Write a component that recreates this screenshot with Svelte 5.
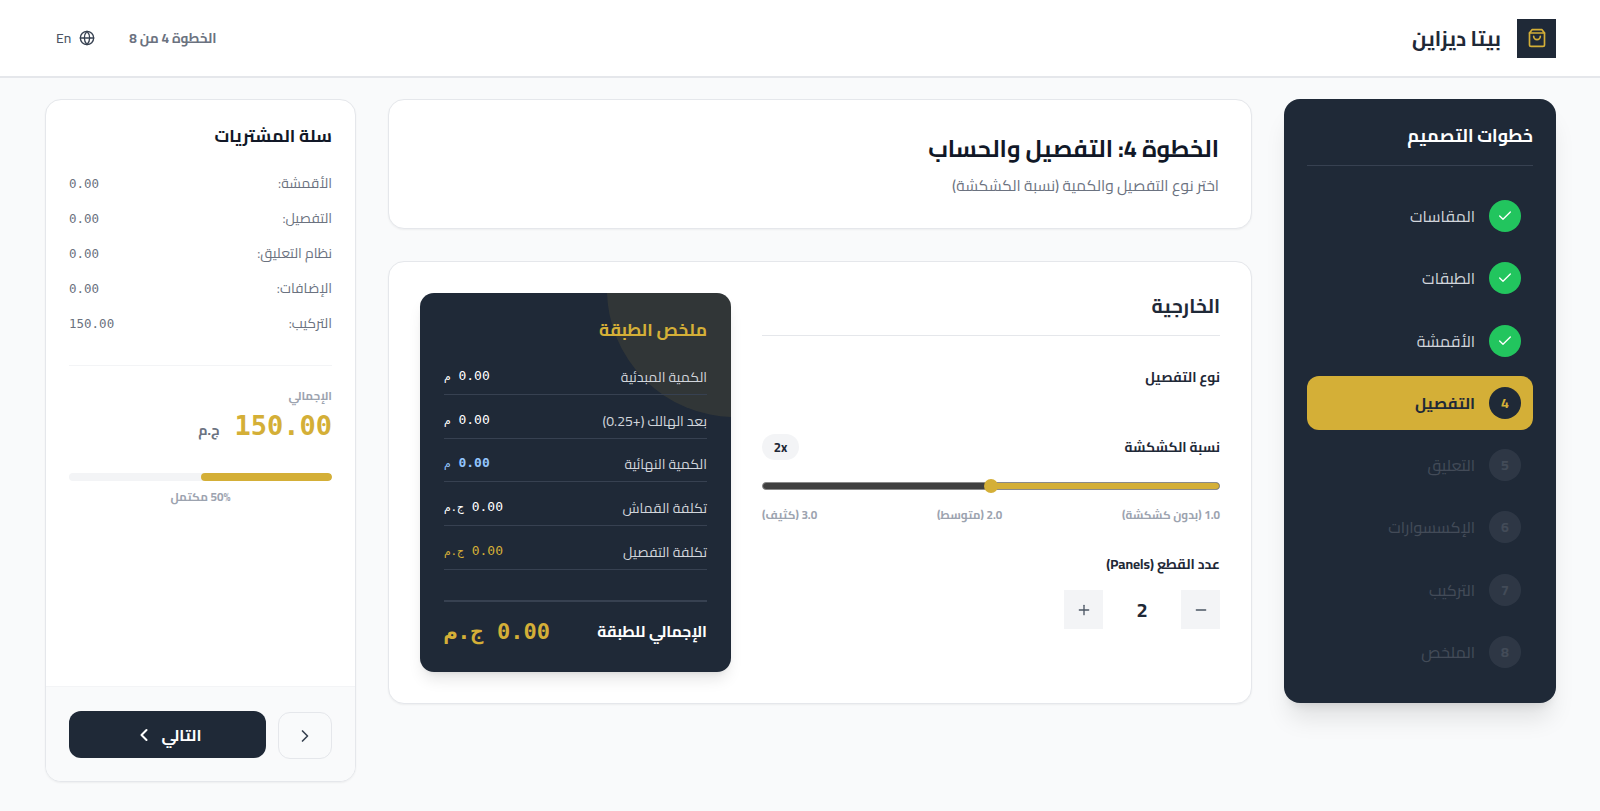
<script>
  const doneSteps = ["المقاسات", "الطبقات", "الأقمشة"];
  const laterSteps = [
    { n: 5, label: "التعليق" },
    { n: 6, label: "الإكسسوارات" },
    { n: 7, label: "التركيب" },
    { n: 8, label: "الملخص" }
  ];
  const cart = [
    ["الأقمشة:", "0.00"],
    ["التفصيل:", "0.00"],
    ["نظام التعليق:", "0.00"],
    ["الإضافات:", "0.00"],
    ["التركيب:", "150.00"]
  ];
  const layerRows = [
    { label: "الكمية المبدئية", value: "0.00", unit: "م", cls: "" },
    { label: "بعد الهالك (+0.25)", value: "0.00", unit: "م", cls: "" },
    { label: "الكمية النهائية", value: "0.00", unit: "م", cls: "blue" },
    { label: "تكلفة القماش", value: "0.00", unit: "ج.م", cls: "" },
    { label: "تكلفة التفصيل", value: "0.00", unit: "ج.م", cls: "gold" }
  ];
</script>

<div class="page" dir="rtl">
  <header>
    <div class="brand">
      <div class="logo">
        <svg width="20" height="20" viewBox="0 0 24 24" fill="none" stroke="#d4af37" stroke-width="2" stroke-linecap="round" stroke-linejoin="round">
          <path d="M6 2 3 6v14a2 2 0 0 0 2 2h14a2 2 0 0 0 2-2V6l-3-4Z" />
          <path d="M3 6h18" />
          <path d="M16 10a4 4 0 0 1-8 0" />
        </svg>
      </div>
      <span class="brand-name">بيتا ديزاين</span>
    </div>
    <div class="head-left">
      <span class="step-count">الخطوة 4 من 8</span>
      <span class="lang">
        <svg width="16" height="16" viewBox="0 0 24 24" fill="none" stroke="#374151" stroke-width="2" stroke-linecap="round" stroke-linejoin="round">
          <circle cx="12" cy="12" r="10" />
          <path d="M12 2a14.5 14.5 0 0 0 0 20 14.5 14.5 0 0 0 0-20" />
          <path d="M2 12h20" />
        </svg>
        <span>En</span>
      </span>
    </div>
  </header>

  <div class="layout">
    <aside class="steps">
      <h2>خطوات التصميم</h2>
      <ul>
        {#each doneSteps as label}
          <li>
            <span class="dot done">
              <svg width="16" height="16" viewBox="0 0 24 24" fill="none" stroke="#fff" stroke-width="2" stroke-linecap="round" stroke-linejoin="round"><path d="M20 6 9 17l-5-5" /></svg>
            </span>
            <span>{label}</span>
          </li>
        {/each}
        <li class="active">
          <span class="dot current">4</span>
          <span>التفصيل</span>
        </li>
        {#each laterSteps as step}
          <li class="later">
            <span class="dot">{step.n}</span>
            <span>{step.label}</span>
          </li>
        {/each}
      </ul>
    </aside>

    <main>
      <section class="card intro">
        <h1>الخطوة 4: التفصيل والحساب</h1>
        <p>اختر نوع التفصيل والكمية (نسبة الكشكشة)</p>
      </section>

      <section class="card detail">
        <div class="form">
          <h3>الخارجية</h3>
          <div class="field-label type-label">نوع التفصيل</div>

          <div class="ratio-head">
            <span class="field-label">نسبة الكشكشة</span>
            <span class="badge">2x</span>
          </div>
          <div class="slider">
            <div class="track-fill"></div>
            <div class="thumb"></div>
          </div>
          <div class="ticks">
            <span>1.0 (بدون كشكشة)</span>
            <span>2.0 (متوسط)</span>
            <span>3.0 (كثيف)</span>
          </div>

          <div class="field-label panels-label">عدد القطع (Panels)</div>
          <div class="stepper">
            <button aria-label="minus">
              <svg width="16" height="16" viewBox="0 0 24 24" fill="none" stroke="#4b5563" stroke-width="2" stroke-linecap="round"><path d="M5 12h14" /></svg>
            </button>
            <span class="qty">2</span>
            <button aria-label="plus">
              <svg width="16" height="16" viewBox="0 0 24 24" fill="none" stroke="#4b5563" stroke-width="2" stroke-linecap="round"><path d="M5 12h14" /><path d="M12 5v14" /></svg>
            </button>
          </div>
        </div>

        <div class="layer">
          <div class="blob"></div>
          <h3>ملخص الطبقة</h3>
          {#each layerRows as row}
            <div class="layer-row">
              <span class="layer-label">{row.label}</span>
              <span class="layer-value {row.cls}">{row.value} <small>{row.unit}</small></span>
            </div>
          {/each}
          <div class="layer-total">
            <span>الإجمالي للطبقة</span>
            <span class="layer-sum">0.00 <small>ج.م</small></span>
          </div>
        </div>
      </section>
    </main>

    <aside class="cart">
      <div class="cart-body">
        <h2>سلة المشتريات</h2>
        <div class="cart-rows">
          {#each cart as [label, value]}
            <div class="cart-row">
              <span>{label}</span>
              <span class="mono">{value}</span>
            </div>
          {/each}
        </div>
        <div class="total">
          <div class="total-label">الإجمالي</div>
          <div class="total-amount">
            <span class="amount">150.00</span>
            <span class="currency">ج.م</span>
          </div>
        </div>
        <div class="progress"><div class="progress-fill" style="width: 50%"></div></div>
        <div class="progress-label">50% مكتمل</div>
      </div>
      <div class="cart-foot">
        <button class="back" aria-label="back">
          <svg width="20" height="20" viewBox="0 0 24 24" fill="none" stroke="#374151" stroke-width="2" stroke-linecap="round" stroke-linejoin="round"><path d="m9 18 6-6-6-6" /></svg>
        </button>
        <button class="next">
          <span>التالي</span>
          <svg width="20" height="20" viewBox="0 0 24 24" fill="none" stroke="#fff" stroke-width="2.5" stroke-linecap="round" stroke-linejoin="round"><path d="m15 18-6-6 6-6" /></svg>
        </button>
      </div>
    </aside>
  </div>
</div>

<style>
  :global(body) {
    margin: 0;
    background: #f9fafb;
    font-family: "Cairo", "Noto Sans Arabic", "Open Sans", "DejaVu Sans", sans-serif;
    color: #1f2937;
  }

  .page {
    min-height: 811px;
  }

  header {
    height: 78px;
    box-sizing: border-box;
    background: #fff;
    border-bottom: 2px solid #e5e7eb;
    display: flex;
    align-items: center;
    justify-content: space-between;
    padding: 0 44px 0 56px;
  }

  .brand {
    display: flex;
    align-items: center;
    gap: 16px;
  }

  .logo {
    width: 39px;
    height: 39px;
    background: #1f2937;
    display: flex;
    align-items: center;
    justify-content: center;
  }

  .brand-name {
    font-size: 20.5px;
    font-weight: 700;
  }

  .head-left {
    display: flex;
    align-items: center;
    gap: 34px;
  }

  .step-count {
    font-size: 13.5px;
    font-weight: 700;
    color: #6b7280;
  }

  .lang {
    display: flex;
    align-items: center;
    gap: 8px;
    font-size: 14px;
    font-weight: 500;
    color: #4b5563;
  }

  .layout {
    display: grid;
    grid-template-columns: 272px 1fr 311px;
    gap: 32px;
    padding: 21px 44px 29px 45px;
    align-items: start;
  }

  .steps {
    background: #1f2937;
    border-radius: 16px;
    padding: 24px 23px;
    height: 604px;
    box-sizing: border-box;
    box-shadow: 0 20px 25px -5px rgba(0, 0, 0, 0.1), 0 8px 10px -6px rgba(0, 0, 0, 0.1);
    color: #fff;
  }

  .steps h2 {
    margin: 0 0 23px;
    padding-bottom: 17px;
    border-bottom: 1px solid #374151;
    font-size: 17.7px;
    line-height: 25px;
    font-weight: 700;
  }

  .steps ul {
    list-style: none;
    margin: 0;
    padding: 0;
    display: flex;
    flex-direction: column;
    gap: 8.3px;
  }

  .steps li {
    height: 54px;
    display: flex;
    align-items: center;
    gap: 14px;
    padding: 0 12px;
    border-radius: 12px;
    font-size: 16px;
    color: #d1d5db;
  }

  .steps li.active {
    background: #d4af37;
    color: #1f2937;
    font-weight: 700;
  }

  .steps li.later > * {
    opacity: 0.2;
  }

  .dot {
    width: 32px;
    height: 32px;
    border-radius: 50%;
    display: flex;
    align-items: center;
    justify-content: center;
    background: #6b7280;
    font-size: 14px;
    font-weight: 700;
    flex: none;
  }

  .dot.done {
    background: #22c55e;
  }

  .dot.current {
    background: #1f2937;
    color: #d4af37;
  }

  main {
    display: flex;
    flex-direction: column;
    gap: 32px;
  }

  .card {
    background: #fff;
    border: 1px solid #e5e7eb;
    border-radius: 16px;
    box-shadow: 0 1px 2px rgba(0, 0, 0, 0.05);
    box-sizing: border-box;
  }

  .intro {
    height: 130px;
    padding: 31px 32px;
  }

  .intro h1 {
    margin: 0 0 7px;
    font-size: 23.35px;
    line-height: 36px;
    font-weight: 700;
    color: #111827;
  }

  .intro p {
    margin: 0;
    font-size: 15.5px;
    line-height: 24px;
    font-weight: 400;
    color: #6b7280;
  }

  .detail {
    height: 443px;
    padding: 31px;
    display: grid;
    grid-template-columns: 1fr 311px;
    gap: 31px;
  }

  .form h3 {
    margin: 0;
    height: 42px;
    font-size: 19.4px;
    font-weight: 700;
    line-height: 26px;
    border-bottom: 1px solid #e5e7eb;
  }

  .field-label {
    font-size: 13.7px;
    line-height: 20px;
    font-weight: 700;
    color: #1f2937;
  }

  .type-label {
    margin-top: 31px;
    margin-bottom: 47px;
  }

  .ratio-head {
    display: flex;
    align-items: center;
    justify-content: space-between;
    height: 26px;
  }

  .badge {
    width: 37px;
    height: 26px;
    border-radius: 13px;
    background: #f3f4f6;
    font-size: 13px;
    font-weight: 700;
    display: flex;
    align-items: center;
    justify-content: center;
  }

  .slider {
    position: relative;
    height: 8px;
    margin-top: 22px;
    border-radius: 4px;
    background: #404040;
    border: 1px solid #8a8a8a;
    box-sizing: border-box;
  }

  .track-fill {
    position: absolute;
    top: 0;
    bottom: 0;
    right: 0;
    width: 50%;
    border-radius: 4px;
    background: #d4af37;
  }

  .thumb {
    position: absolute;
    top: 50%;
    left: 50%;
    width: 14px;
    height: 14px;
    margin: -7px 0 0 -7px;
    border-radius: 50%;
    background: #d4af37;
  }

  .ticks {
    display: flex;
    justify-content: space-between;
    margin-top: 17px;
    font-size: 11.7px;
    line-height: 16px;
    color: #9ca3af;
    font-weight: 700;
  }

  .panels-label {
    margin-top: 31px;
  }

  .stepper {
    display: flex;
    align-items: center;
    margin-top: 16px;
  }

  .stepper button {
    width: 39px;
    height: 39px;
    border: none;
    background: #f3f4f6;
    display: flex;
    align-items: center;
    justify-content: center;
    padding: 0;
  }

  .qty {
    width: 78px;
    text-align: center;
    font-size: 20px;
    font-weight: 700;
  }

  .layer {
    position: relative;
    overflow: hidden;
    background: #1f2937;
    border-radius: 14px;
    padding: 24px;
    height: 379px;
    box-sizing: border-box;
    color: #fff;
    box-shadow: 0 10px 15px -3px rgba(0, 0, 0, 0.1), 0 4px 6px -4px rgba(0, 0, 0, 0.1);
  }

  .blob {
    position: absolute;
    top: -132px;
    right: -132px;
    width: 256px;
    height: 256px;
    border-radius: 50%;
    background: rgba(212, 175, 55, 0.1);
  }

  .layer h3 {
    position: relative;
    margin: 0 0 9.3px;
    font-size: 17.5px;
    line-height: 25px;
    font-weight: 700;
    color: #d4af37;
  }

  .layer-row {
    position: relative;
    display: flex;
    justify-content: space-between;
    align-items: flex-end;
    height: 43.7px;
    box-sizing: border-box;
    padding-bottom: 7px;
    line-height: 20px;
    border-bottom: 1px solid #374151;
  }

  .layer-label {
    font-size: 14px;
    color: #d1d5db;
  }

  .layer-value {
    font-family: "DejaVu Sans Mono", monospace;
    font-size: 13px;
    color: #fff;
  }

  .layer-value small {
    font-size: 11px;
  }

  .layer-value.blue {
    color: #93c5fd;
    font-weight: 700;
  }

  .layer-value.blue small {
    font-weight: 400;
  }

  .layer-value.gold {
    color: #d4af37;
  }

  .layer-total {
    position: relative;
    margin-top: 30px;
    padding-top: 13px;
    border-top: 2px solid #374151;
    display: flex;
    justify-content: space-between;
    align-items: center;
    font-size: 15.6px;
    line-height: 34px;
    font-weight: 700;
  }

  .layer-sum {
    font-family: "DejaVu Sans Mono", monospace;
    font-size: 22px;
    font-weight: 700;
    color: #d4af37;
  }

  .layer-sum small {
    font-size: 22px;
  }

  .cart {
    background: #fff;
    border: 1px solid #e5e7eb;
    border-radius: 16px;
    height: 683px;
    box-sizing: border-box;
    display: flex;
    flex-direction: column;
    box-shadow: 0 1px 2px rgba(0, 0, 0, 0.05);
    overflow: hidden;
  }

  .cart-body {
    flex: 1;
    padding: 24px 23px;
  }

  .cart h2 {
    margin: 0 0 17.5px;
    font-size: 17.55px;
    line-height: 24px;
    font-weight: 700;
    color: #111827;
  }

  .cart-rows {
    display: flex;
    flex-direction: column;
    padding-bottom: 24px;
    border-bottom: 1px solid #f3f4f6;
  }

  .cart-row {
    height: 35px;
    display: flex;
    justify-content: space-between;
    align-items: center;
    font-size: 14px;
    color: #6b7280;
  }

  .mono {
    font-family: "DejaVu Sans Mono", monospace;
    font-size: 12.5px;
    color: #6b7280;
  }

  .total {
    margin-top: 22px;
  }

  .total-label {
    font-size: 11.7px;
    line-height: 16px;
    font-weight: 700;
    color: #9ca3af;
  }

  .total-amount {
    display: flex;
    align-items: baseline;
    gap: 15px;
    line-height: 44px;
  }

  .amount {
    font-family: "DejaVu Sans Mono", monospace;
    font-size: 27px;
    font-weight: 700;
    color: #d4af37;
  }

  .currency {
    font-size: 14px;
    font-weight: 700;
    color: #6b7280;
  }

  .progress {
    margin-top: 21px;
    height: 8px;
    border-radius: 4px;
    background: #f3f4f6;
    overflow: hidden;
  }

  .progress-fill {
    height: 100%;
    background: #d4af37;
    border-radius: 4px;
  }

  .progress-label {
    text-align: center;
    margin-top: 8px;
    font-size: 11.7px;
    line-height: 16px;
    font-weight: 700;
    color: #9ca3af;
  }

  .cart-foot {
    height: 95px;
    box-sizing: border-box;
    border-top: 1px solid #f3f4f6;
    background: #f9fafb;
    padding: 24px 23px;
    display: flex;
    gap: 12px;
  }

  .cart-foot button {
    font-family: inherit;
    height: 47px;
    border-radius: 12px;
    display: flex;
    align-items: center;
    justify-content: center;
  }

  .back {
    width: 54px;
    flex: none;
    margin-top: 1px;
    background: transparent;
    border: 1px solid #e5e7eb;
    padding: 0;
  }

  .next {
    flex: 1;
    border: none;
    background: #1f2937;
    color: #fff;
    font-size: 16px;
    font-weight: 700;
    gap: 8px;
  }
</style>
